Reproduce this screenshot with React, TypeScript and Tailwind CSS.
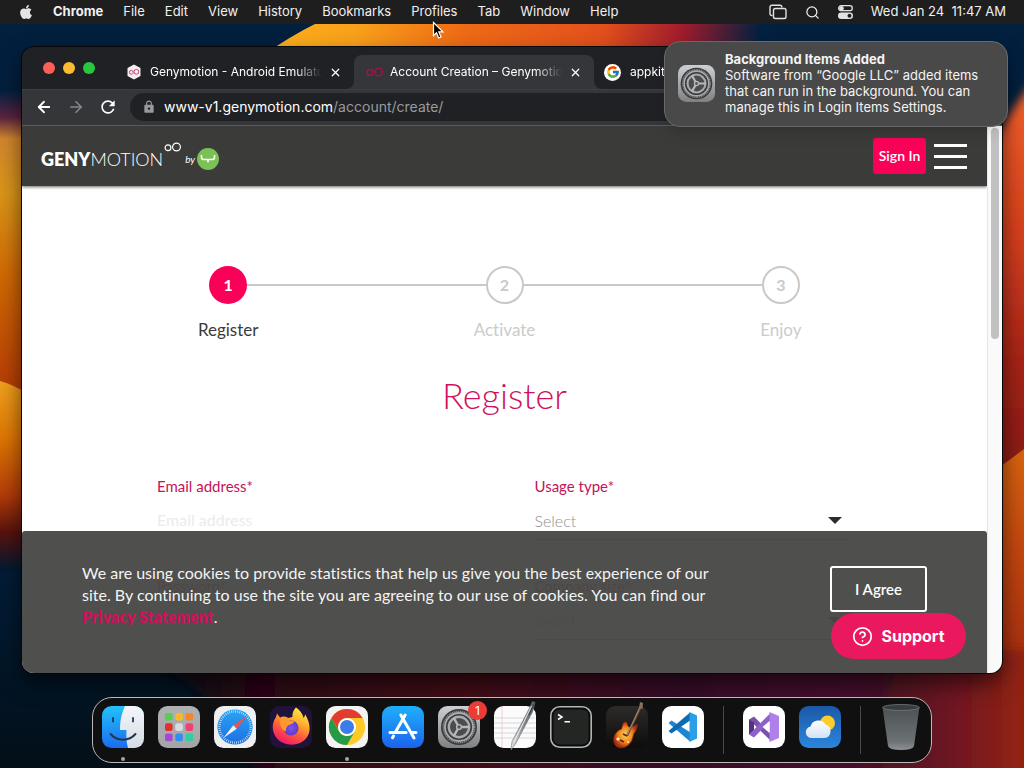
import React from "react";
import { ArrowLeft, ArrowRight, CircleHelp, Search, X } from "lucide-react";
import { FaApple } from "react-icons/fa";
import { FcGoogle } from "react-icons/fc";
import { MdLock, MdRefresh } from "react-icons/md";

const menus = ["File", "Edit", "View", "History", "Bookmarks", "Profiles", "Tab", "Window", "Help"];

function Wallpaper() {
  return (
    <svg className="absolute inset-0 h-full w-full" viewBox="0 0 1024 768" preserveAspectRatio="none" aria-hidden="true">
      <defs>
        <linearGradient id="sky" x1="0" y1="0" x2="0" y2="1">
          <stop offset="0" stopColor="#02203f" />
          <stop offset="0.75" stopColor="#021c36" />
          <stop offset="1" stopColor="#020f18" />
        </linearGradient>
        <linearGradient id="top" gradientUnits="userSpaceOnUse" x1="270" y1="0" x2="760" y2="40">
          <stop offset="0" stopColor="#fbb01c" />
          <stop offset="0.18" stopColor="#f9a01a" />
          <stop offset="0.4" stopColor="#ee6a16" />
          <stop offset="0.68" stopColor="#e2501c" />
          <stop offset="0.84" stopColor="#a01c2c" />
          <stop offset="1" stopColor="#02203f" />
        </linearGradient>
        <linearGradient id="leftA" gradientUnits="userSpaceOnUse" x1="0" y1="90" x2="0" y2="395">
          <stop offset="0" stopColor="#02203f" />
          <stop offset="0.09" stopColor="#5c2340" />
          <stop offset="0.16" stopColor="#d1862e" />
          <stop offset="0.34" stopColor="#d99518" />
          <stop offset="0.6" stopColor="#d06a04" />
          <stop offset="1" stopColor="#b43a04" />
        </linearGradient>
        <linearGradient id="leftB" gradientUnits="userSpaceOnUse" x1="0" y1="382" x2="0" y2="570">
          <stop offset="0" stopColor="#f0a01c" />
          <stop offset="0.3" stopColor="#dd7604" />
          <stop offset="0.6" stopColor="#b33c08" />
          <stop offset="0.8" stopColor="#58120e" />
          <stop offset="1" stopColor="#021a30" />
        </linearGradient>
        <linearGradient id="rightA" gradientUnits="userSpaceOnUse" x1="0" y1="90" x2="0" y2="470">
          <stop offset="0" stopColor="#f0602a" />
          <stop offset="0.35" stopColor="#d8421c" />
          <stop offset="0.7" stopColor="#a82418" />
          <stop offset="1" stopColor="#861a16" />
        </linearGradient>
        <linearGradient id="rightB" gradientUnits="userSpaceOnUse" x1="0" y1="450" x2="0" y2="768">
          <stop offset="0" stopColor="#d86410" />
          <stop offset="0.3" stopColor="#c4480e" />
          <stop offset="0.7" stopColor="#a42c10" />
          <stop offset="1" stopColor="#8a2014" />
        </linearGradient>
        <linearGradient id="floor" gradientUnits="userSpaceOnUse" x1="170" y1="0" x2="1024" y2="0">
          <stop offset="0" stopColor="#0c0a18" />
          <stop offset="0.1" stopColor="#2c0618" />
          <stop offset="0.35" stopColor="#420a18" />
          <stop offset="0.6" stopColor="#360a28" />
          <stop offset="0.85" stopColor="#521224" />
          <stop offset="0.93" stopColor="#741820" />
          <stop offset="1" stopColor="#942410" />
        </linearGradient>
        <filter id="soft"><feGaussianBlur stdDeviation="5" /></filter>
      </defs>
      <rect width="1024" height="768" fill="url(#sky)" />
      <path d="M262 56 Q330 8 400 -6 L780 -6 L760 120 L262 120Z" fill="url(#top)" />
      <path d="M-10 90H60V400H-10Z" fill="url(#leftA)" />
      <path d="M0 381 Q12 384 40 400 V570 H0Z" fill="url(#leftB)" />
      <path d="M1040 75 Q1012 105 990 150 V500H1040Z" fill="url(#rightA)" filter="url(#soft)" />
      <path d="M980 482 L1024 449 V768 H980Z" fill="url(#rightB)" />
      <path d="M165 650H1040V790H265Q240 710 165 670Z" fill="url(#floor)" filter="url(#soft)" />
      <path d="M705 660 Q725 700 730 768 H860 L900 660Z" fill="#3d1030" opacity="0.5" />
    </svg>
  );
}

function Gear({ id, className }: { id: string; className: string }) {
  return (
    <svg className={className} viewBox="0 0 42 42" aria-hidden="true">
      <defs>
        <linearGradient id={id} x1="0" y1="0" x2="0" y2="1">
          <stop offset="0" stopColor="#cdd0d2" />
          <stop offset="1" stopColor="#7f8082" />
        </linearGradient>
      </defs>
      <rect width="42" height="42" rx="9.5" fill={`url(#${id})`} />
      <circle cx="21" cy="21" r="18" fill="#3a3b3d" />
      <circle cx="21" cy="21" r="15.6" fill="none" stroke="#8b8d8f" strokeWidth="1.6" strokeDasharray="1.3 0.7" />
      <circle cx="21" cy="21" r="14" fill="none" stroke="#a9abad" strokeWidth="1.8" />
      <circle cx="21" cy="21" r="10.2" fill="#4a4c4e" stroke="#a9abad" strokeWidth="2.4" />
      <path d="M21 21 L31.500 21 M21 21 L15.700 11.800 M21 21 L15.700 30.200" stroke="#b6b8ba" strokeWidth="2.400" />
      <circle cx="21" cy="21" r="2.400" fill="#55575a" stroke="#b6b8ba" strokeWidth="1.400" />
    </svg>
  );
}

function Finder() {
  return (
    <svg className="size-full" viewBox="0 0 42 42" aria-hidden="true">
      <defs>
        <linearGradient id="fa" x1="0" y1="0" x2="0" y2="1"><stop stopColor="#22c2fb" /><stop offset="1" stopColor="#1b6cf0" /></linearGradient>
        <linearGradient id="fb" x1="0" y1="0" x2="0" y2="1"><stop stopColor="#f4f6f8" /><stop offset="1" stopColor="#d5dbe6" /></linearGradient>
        <clipPath id="fc"><rect width="42" height="42" rx="9.5" /></clipPath>
      </defs>
      <g clipPath="url(#fc)">
        <rect width="42" height="42" fill="url(#fa)" />
        <path d="M23 0 C19 9 18 16 18 24 H24.500 C24 31 24.500 37 26 42 H42V0Z" fill="url(#fb)" />
        <path d="M11 12v3.500M31 12v3.500" stroke="#173a5e" strokeWidth="1.800" strokeLinecap="round" />
        <path d="M8.500 28 C15 35.500 27 35.500 33.500 28" fill="none" stroke="#1f3650" strokeWidth="2" strokeLinecap="round" />
      </g>
    </svg>
  );
}

function Launchpad() {
  const colors = ["#55cf4f", "#fcb827", "#f6862a", "#e22f2f", "#d6dcdd", "#f1416f", "#a647d8", "#2f8ff0", "#2fcfa0"];
  return (
    <svg className="size-full" viewBox="0 0 42 42" aria-hidden="true">
      <defs><linearGradient id="lp" x1="0" y1="0" x2="0" y2="1"><stop stopColor="#aeb0b1" /><stop offset="1" stopColor="#a3a5a6" /></linearGradient></defs>
      <rect width="42" height="42" rx="9.5" fill="url(#lp)" />
      {colors.map((c, i) => (
        <rect key={c} x={7 + (i % 3) * 10.3} y={7 + Math.floor(i / 3) * 10.3} width="7.6" height="7.6" rx="2" fill={c} />
      ))}
    </svg>
  );
}

function Safari() {
  return (
    <svg className="size-full" viewBox="0 0 42 42" aria-hidden="true">
      <defs><linearGradient id="sf" x1="0" y1="0" x2="0" y2="1"><stop stopColor="#2aa5f2" /><stop offset="1" stopColor="#1d6ee2" /></linearGradient></defs>
      <rect width="42" height="42" rx="9.5" fill="#edeff1" />
      <circle cx="21" cy="21" r="17.6" fill="url(#sf)" />
      <circle cx="21" cy="21" r="15.6" fill="none" stroke="#d7ecff" strokeWidth="2.4" strokeDasharray="0.7 1.34" />
      <path d="M33 10 L19.300 19.300 L22.700 22.700Z" fill="#f0504a" />
      <path d="M9.500 32 L19.300 19.300 L22.700 22.700Z" fill="#f2f5f8" />
    </svg>
  );
}

function Firefox() {
  return (
    <svg className="size-full" viewBox="0 0 42 42" aria-hidden="true">
      <defs>
        <linearGradient id="ff" x1="0.8" y1="0" x2="0.3" y2="1"><stop stopColor="#fff04a" /><stop offset="0.35" stopColor="#ffb02c" /><stop offset="0.65" stopColor="#ff5a3c" /><stop offset="1" stopColor="#f0146e" /></linearGradient>
        <radialGradient id="fg"><stop stopColor="#8150f0" /><stop offset="1" stopColor="#5a3cc4" /></radialGradient>
      </defs>
      <rect width="42" height="42" rx="9.5" fill="#201238" />
      <path d="M26 1.500 C31 5 33 9 33.500 12 C35 10.500 35 8.500 35 8 C41 18 41 27 36 32.500 C28.500 41 14 40.500 7 32.500 C1.500 26 1.500 17 6 11 L7 7.500 L10 11.500 C13 10 16 10.500 18 12 L22.500 11 C22 7 24 3.500 26 1.500Z" fill="url(#ff)" />
      <circle cx="21" cy="22" r="7.600" fill="url(#fg)" />
      <path d="M10.500 13 C14 10 18 11 20 14.500 L24.500 15.500 C23.500 18 20 18.200 18 19.500 C16 21.500 15.500 23.500 16 25.500 C11 24 9.500 18.500 10.500 13Z" fill="#ff982e" />
    </svg>
  );
}

function Chrome() {
  return (
    <svg className="size-full" viewBox="0 0 42 42" aria-hidden="true">
      <rect width="42" height="42" rx="9.5" fill="#f3f3f3" />
      <circle cx="21" cy="21" r="18" fill="#ffc928" />
      <path d="M5.400 12 A18 18 0 0 1 36.600 12 H21 A9 9 0 0 0 13.200 16.500 L12.500 24Z" fill="#e23c32" />
      <path d="M5.400 12 A18 18 0 0 0 21 39 L28.800 25.500 A9 9 0 0 1 13.200 25.500Z" fill="#259b4a" />
      <circle cx="21" cy="21" r="9" fill="#fff" />
      <circle cx="21" cy="21" r="7" fill="#3b7de8" />
    </svg>
  );
}

function AppStore() {
  return (
    <svg className="size-full" viewBox="0 0 42 42" aria-hidden="true">
      <defs><linearGradient id="as" x1="0" y1="0" x2="0" y2="1"><stop stopColor="#1fb0fa" /><stop offset="1" stopColor="#1b63ee" /></linearGradient></defs>
      <rect width="42" height="42" rx="9.5" fill="url(#as)" />
      <g stroke="#fff" strokeWidth="3" strokeLinecap="round">
        <path d="M23.200 9 L13.500 26" />
        <path d="M18.800 9 L32 32" />
        <path d="M8 26.500 H24" />
        <path d="M30.500 26.500 H34" />
        <path d="M11.500 30 L10.500 31.800" />
      </g>
    </svg>
  );
}

function TextEdit() {
  return (
    <svg className="size-full overflow-visible" viewBox="0 0 42 42" aria-hidden="true">
      <defs><linearGradient id="te" x1="0" y1="0" x2="1" y2="0"><stop stopColor="#e6e8ea" /><stop offset="0.5" stopColor="#8b9094" /><stop offset="1" stopColor="#4f5458" /></linearGradient></defs>
      <rect width="42" height="42" rx="9.5" fill="#fbfbfb" />
      <path d="M1 12H41M0 17H42M0 22H42M0 27H42M0 32H42" stroke="#d2d2d2" strokeWidth="0.9" />
      <path d="M8 1V41" stroke="#efc4c0" strokeWidth="0.8" />
      <path d="M38.500 -4.500 L41 -3.500 L38.500 6 L22 37 L17 44 L18 35.500 L35 3Z" fill="url(#te)" stroke="#6b7074" strokeWidth="0.600" />
      <path d="M37.500 0 L20 36" stroke="#f5f6f7" strokeWidth="0.900" />
      <path d="M40 -2 L35 9" stroke="#34383b" strokeWidth="0.900" />
    </svg>
  );
}

function Terminal() {
  return (
    <svg className="size-full" viewBox="0 0 42 42" aria-hidden="true">
      <rect x="0.800" y="0.800" width="40.400" height="40.400" rx="9" fill="#0b0b0c" stroke="#b3b5b6" strokeWidth="1.600" />
      <rect x="3.500" y="3.500" width="35" height="35" rx="6" fill="#242624" />
      <path d="M8 8.500 L12 11 L8 13.500 M14.500 15.800H20" fill="none" stroke="#fff" strokeWidth="1.500" />
    </svg>
  );
}

function GarageBand() {
  return (
    <svg className="size-full overflow-visible" viewBox="0 0 42 42" aria-hidden="true">
      <defs>
        <linearGradient id="gb" x1="0" y1="0" x2="0" y2="1"><stop stopColor="#2c2b2a" /><stop offset="1" stopColor="#0d0c0b" /></linearGradient>
        <radialGradient id="gg"><stop stopColor="#ffd34a" /><stop offset="0.600" stopColor="#f0821e" /><stop offset="1" stopColor="#a82a10" /></radialGradient>
      </defs>
      <rect width="42" height="42" rx="9.5" fill="url(#gb)" />
      <path d="M20 16 C17 15 17 19 15.500 23 C9 25.500 6 32 8.500 38 C11 43 18 43 22.500 39 C27 35 26.500 31 28 27.500 C30 25 32 22 31 18 C28 20 25 22 22.500 20.500 C21 19 22 17 20 16Z" fill="url(#gg)" stroke="#7b2211" strokeWidth="0.700" />
      <path d="M21 30 L35 0" stroke="#6c5340" strokeWidth="2.200" />
      <path d="M20 31 L34 1" stroke="#c7a27c" strokeWidth="0.700" />
      <path d="M33 2 L34 -4 L37 -3 L36.500 3Z" fill="#8c7058" />
      <path d="M14 34 L18 36 M17 28 L21 30" stroke="#4b2a1c" strokeWidth="1.600" />
      <circle cx="12" cy="33" r="1.600" fill="#fff3bd" />
      <circle cx="22" cy="36" r="1" fill="#fff3bd" />
    </svg>
  );
}

function VSCode() {
  return (
    <svg className="size-full" viewBox="0 0 42 42" aria-hidden="true">
      <rect width="42" height="42" rx="9.5" fill="#fff" />
      <path d="M6.500 17 L9.500 14.500 L34 30 L28 35.500Z" fill="#1c86d1" />
      <path d="M6.500 25 L28 6.500 L33 11 L9.500 27.500Z" fill="#0d6bb3" />
      <path d="M27.500 6 L35 9.500 V32.500 L27.500 36 Z" fill="#2b9ee8" />
    </svg>
  );
}

function VisualStudio() {
  return (
    <svg className="size-full" viewBox="0 0 42 42" aria-hidden="true">
      <rect width="42" height="42" rx="9.5" fill="#fff" />
      <path d="M6 13.500 L11 10.500 L28 28 V35 Z" fill="#7a52ae" />
      <path d="M6 13.500 L11 16.500 V25.500 L6 28.500Z" fill="#52317f" />
      <path d="M6 28.500 L11 31.500 L28 14 V6.500Z" fill="#8e60ca" />
      <path d="M26.500 6 L36 10 V32 L26.500 36Z" fill="#b080ea" />
      <path d="M26.500 15 V27 L19.500 21Z" fill="#fff" />
    </svg>
  );
}

function Weather() {
  return (
    <svg className="size-full" viewBox="0 0 42 42" aria-hidden="true">
      <defs>
        <linearGradient id="wa" x1="0" y1="0" x2="0" y2="1"><stop stopColor="#1c58a8" /><stop offset="1" stopColor="#2b86dd" /></linearGradient>
        <linearGradient id="wb" x1="0" y1="0" x2="0" y2="1"><stop stopColor="#fff" /><stop offset="1" stopColor="#cfe2f6" /></linearGradient>
      </defs>
      <rect width="42" height="42" rx="9.5" fill="url(#wa)" />
      <circle cx="28.500" cy="17" r="7.500" fill="#fccb2c" />
      <path d="M12.500 32 A5.800 5.800 0 0 1 11.500 20.500 A8.200 8.200 0 0 1 26.500 18.500 A6.900 6.900 0 0 1 25.500 32Z" fill="url(#wb)" />
    </svg>
  );
}

function Trash() {
  return (
    <svg className="size-full overflow-visible" viewBox="0 0 42 42" aria-hidden="true">
      <defs><linearGradient id="tr" x1="0" y1="0" x2="0" y2="1"><stop stopColor="#4c5154" /><stop offset="0.800" stopColor="#6c7174" /><stop offset="1" stopColor="#8f9294" /></linearGradient></defs>
      <path d="M2.500 1 L8 40 Q9 44 21 44 Q33 44 34 40 L39.500 1Z" fill="url(#tr)" />
      <ellipse cx="21" cy="1.500" rx="18.500" ry="3" fill="#393d3f" stroke="#74787b" strokeWidth="0.800" />
    </svg>
  );
}

interface DockApp {
  name: string;
  icon: React.ReactNode;
  running?: boolean;
  badge?: string;
}

const apps: DockApp[] = [
  { name: "Finder", icon: <Finder />, running: true },
  { name: "Launchpad", icon: <Launchpad /> },
  { name: "Safari", icon: <Safari /> },
  { name: "Firefox", icon: <Firefox /> },
  { name: "Google Chrome", icon: <Chrome />, running: true },
  { name: "App Store", icon: <AppStore /> },
  { name: "System Settings", icon: <Gear id="dock-gear" className="size-full" />, badge: "1" },
  { name: "TextEdit", icon: <TextEdit /> },
  { name: "Terminal", icon: <Terminal /> },
  { name: "GarageBand", icon: <GarageBand /> },
  { name: "Visual Studio Code", icon: <VSCode /> },
];
const recent: DockApp[] = [
  { name: "Visual Studio", icon: <VisualStudio /> },
  { name: "Weather", icon: <Weather /> },
];

function DockItem({ app }: { app: DockApp }) {
  return (
    <button type="button" aria-label={app.name} className="relative size-[42px] shrink-0">
      {app.icon}
      {app.badge && (
        <span className="absolute -top-[5px] -right-[7px] flex size-[19px] items-center justify-center rounded-full bg-[#ec3b36] text-xs text-white">
          {app.badge}
        </span>
      )}
      {app.running && <span className="absolute top-[51px] left-[19px] size-1 rounded-full bg-[#a5a5a5]" />}
    </button>
  );
}

function Dock() {
  return (
    <nav aria-label="Dock" className="relative mx-auto mb-[5px] flex h-[66px] items-start gap-[14px] rounded-[20px] border border-[#bfb6b8] bg-[#101011] px-[9px] pt-2">
      {apps.map((a) => <DockItem key={a.name} app={a} />)}
      <span className="mx-[5px] h-12 w-px bg-[#4a4a4a]" />
      {recent.map((a) => <DockItem key={a.name} app={a} />)}
      <span className="mx-[5px] h-12 w-px bg-[#4a4a4a]" />
      <DockItem app={{ name: "Trash", icon: <Trash /> }} />
    </nav>
  );
}

function MenuBar() {
  return (
    <header className="relative flex h-6 items-center bg-[#1f1e1e] px-[18px] text-[13px] text-[#f0f0f0]">
      <FaApple className="mr-[19px] size-4 text-[#e4e4e4]" />
      <nav className="flex items-center gap-5">
        <button type="button" className="font-bold">Chrome</button>
        {menus.map((m) => <button type="button" key={m}>{m}</button>)}
      </nav>
      <div className="ml-auto flex items-center gap-[18px]">
        <svg className="h-4 w-[18px]" viewBox="0 0 18 16" fill="none" stroke="#e2e2e2" strokeWidth="1.400" aria-hidden="true">
          <path d="M3.500 11.500 H2.800 A1.800 1.800 0 0 1 1 9.700 V3 A1.800 1.800 0 0 1 2.800 1.200 H11 A1.800 1.800 0 0 1 12.800 3 V3.500" />
          <rect x="4.500" y="4.500" width="12.500" height="10" rx="1.800" />
        </svg>
        <Search className="size-[15px]" />
        <svg className="h-4 w-[15px]" viewBox="0 0 15 16" aria-hidden="true">
          <rect x="0.700" y="1.700" width="13.600" height="5" rx="2.500" fill="none" stroke="#e2e2e2" strokeWidth="1.300" />
          <circle cx="3.500" cy="4.200" r="2.300" fill="#e2e2e2" />
          <rect y="8.500" width="15" height="6.500" rx="3.200" fill="#e2e2e2" />
          <circle cx="11.500" cy="11.700" r="2" fill="#1f1e1e" />
        </svg>
        <time className="whitespace-pre">{"Wed Jan 24  11:47 AM"}</time>
      </div>
    </header>
  );
}

function Tab({ icon, title, active }: { icon: React.ReactNode; title: string; active?: boolean }) {
  return (
    <div className={active ? "relative flex w-60 shrink-0 items-center rounded-t-lg bg-[#35363a] px-3" : "flex w-60 shrink-0 items-center px-3"}>
      <span className="flex w-6 shrink-0 items-center">{icon}</span>
      <button type="button" className="w-[175px] overflow-hidden text-left whitespace-nowrap text-white [mask-image:linear-gradient(to_right,black_84%,transparent)]">
        {title}
      </button>
      <button type="button" aria-label="Close tab" className="ml-[7px]"><X className="size-[13px] text-white" strokeWidth={2.2} /></button>
      {active && (
        <>
          <svg className="absolute bottom-0 -left-2 size-2" viewBox="0 0 8 8" aria-hidden="true"><path d="M8 0V8H0A8 8 0 0 0 8 0Z" fill="#35363a" /></svg>
          <svg className="absolute -right-2 bottom-0 size-2" viewBox="0 0 8 8" aria-hidden="true"><path d="M0 0V8H8A8 8 0 0 1 0 0Z" fill="#35363a" /></svg>
        </>
      )}
    </div>
  );
}

function BrowserChrome() {
  return (
    <div className="text-[12px]">
      <div className="flex h-[42px] overflow-hidden bg-[#202124] pt-2">
        <div className="flex w-[92px] shrink-0 items-center gap-2 pb-2 pl-[21px]">
          <button type="button" aria-label="Close" className="size-3 rounded-full bg-[#fe5f57]" />
          <button type="button" aria-label="Minimize" className="size-3 rounded-full bg-[#fdbc2e]" />
          <button type="button" aria-label="Zoom" className="size-3 rounded-full bg-[#28c840]" />
        </div>
        <Tab
          title="Genymotion - Android Emulator"
          icon={
            <svg className="size-4" viewBox="0 0 16 16" aria-hidden="true">
              <path d="M8 0.500L14.500 4V12L8 15.500L1.500 12V4Z" fill="#f3edf1" />
              <circle cx="5.300" cy="8.300" r="1.900" fill="none" stroke="#c64a78" />
              <circle cx="10.400" cy="7.800" r="2.400" fill="none" stroke="#c64a78" />
            </svg>
          }
        />
        <Tab
          active
          title="Account Creation – Genymotion"
          icon={
            <svg className="h-4 w-[18px]" viewBox="0 0 18 16" fill="none" stroke="#9c1449" strokeWidth="1.500" aria-hidden="true">
              <circle cx="4" cy="8.500" r="3" />
              <circle cx="12.800" cy="8" r="3.800" />
            </svg>
          }
        />
        <Tab title="appkit - Google Search" icon={<span className="-ml-0.5 flex size-[17px] items-center justify-center rounded-full bg-white"><FcGoogle className="size-3.5" /></span>} />
      </div>
      <div className="flex h-9 items-center border-t border-[#3d3e42] bg-[#35363a] pb-0.5 pl-[13px] text-white">
        <button type="button" aria-label="Back"><ArrowLeft className="size-[18px]" strokeWidth={2.4} /></button>
        <button type="button" aria-label="Forward" className="ml-[14px]"><ArrowRight className="size-[18px] text-[#85868a]" strokeWidth={2.2} /></button>
        <button type="button" aria-label="Reload" className="ml-[13px]"><MdRefresh className="size-5" /></button>
        <div className="ml-3 flex h-7 flex-1 items-center rounded-l-full bg-[#202124] pl-3">
          <MdLock className="size-[14px] text-[#97999d]" />
          <a href="#address" className="ml-2 text-[14px]">
            www-v1.genymotion.com<span className="text-[#999b9f]">/account/create/</span>
          </a>
        </div>
      </div>
    </div>
  );
}

const steps = [
  { n: "1", label: "Register", on: true },
  { n: "2", label: "Activate", on: false },
  { n: "3", label: "Enjoy", on: false },
];

function Steps() {
  return (
    <ol className="grid grid-cols-3 px-[68px] pt-20">
      {steps.map((s, i) => (
        <li key={s.n}>
          <div className="flex items-center">
            <span className={i === 0 ? "h-0.5 flex-1" : "h-0.5 flex-1 bg-[#c9c9c9]"} />
            <span className={s.on ? "flex size-[38px] items-center justify-center rounded-full bg-[#fb0058] text-base font-bold text-white" : "flex size-[38px] items-center justify-center rounded-full border-2 border-[#c9c9c9] text-base font-bold text-[#c9c9c9]"}>
              {s.n}
            </span>
            <span className={i === 2 ? "h-0.5 flex-1" : "h-0.5 flex-1 bg-[#c9c9c9]"} />
          </div>
          <p className={s.on ? "mt-4 text-center text-[17px] leading-5 text-[#3b3b3b]" : "mt-4 text-center text-[17px] leading-5 text-[#cbcbcb]"}>{s.label}</p>
        </li>
      ))}
    </ol>
  );
}

function TextField({ id, label, placeholder, type }: { id: string; label: string; placeholder: string; type: string }) {
  return (
    <div>
      <label htmlFor={id} className="block text-[15px] leading-5 text-[#c4135a]">{label}</label>
      <input id={id} type={type} placeholder={placeholder} className="mt-1.5 block h-[38px] w-full border-b border-[#ddd] pb-0.5 text-base outline-none placeholder:text-[#ebebeb]" />
    </div>
  );
}

function SelectField({ id, label }: { id: string; label: string }) {
  return (
    <div>
      <label htmlFor={id} className="block text-[15px] leading-5 text-[#c4135a]">{label}</label>
      <div className="mt-1.5 flex h-[38px] items-center border-b border-[#888] pr-2.5">
        <select id={id} className="min-w-0 flex-1 appearance-none bg-transparent text-base font-light text-[#8f8f8f] outline-none">
          <option>Select</option>
        </select>
        <svg className="h-[7px] w-[14px]" viewBox="0 0 14 7" aria-hidden="true"><path d="M0 0H14L7 7Z" fill="#2c2c2c" /></svg>
      </div>
    </div>
  );
}

function Site() {
  return (
    <div className="relative flex-1 overflow-hidden bg-white font-['Lato',sans-serif] [font-variant-ligatures:none]">
      <header className="relative flex h-[60px] items-center bg-[#3b3b3a] pr-5 pl-[19px] shadow-[0_1px_3px_rgba(0,0,0,0.6)]">
        <a href="#home" className="flex items-center pt-1.5 text-white">
          <span className="text-[18px] font-extrabold">GENY</span>
          <span className="text-[18px] font-light">MOTION</span>
          <svg className="mb-6 ml-px h-[10px] w-[18px]" viewBox="0 0 18 10" fill="none" stroke="#fff" strokeWidth="1.200" aria-hidden="true">
            <circle cx="4" cy="5.800" r="2.900" />
            <circle cx="12.500" cy="5" r="3.900" />
          </svg>
          <span className="ml-[3px] text-[10px] italic">by</span>
          <svg className="ml-0.5 size-[22px]" viewBox="0 0 22 22" aria-hidden="true">
            <circle cx="11" cy="11" r="11" fill="#7cc156" />
            <path d="M4.500 7V9.500Q4.500 11.500 6.500 11.500H15.500Q17.500 11.500 17.500 9.500V7M11 11.500V14.500" fill="none" stroke="#fff" strokeWidth="1.600" />
          </svg>
        </a>
        <button type="button" className="ml-auto h-9 w-[53px] rounded-[3px] bg-[#fb0058] text-sm font-semibold text-white">Sign In</button>
        <button type="button" aria-label="Menu" className="ml-2 flex w-[33px] flex-col gap-2">
          <span className="h-[3px] bg-white" />
          <span className="h-[3px] bg-white" />
          <span className="h-[3px] bg-white" />
        </button>
      </header>
      <main>
        <Steps />
        <h1 className="mt-[35px] mb-[61px] text-center text-4xl leading-10 font-light text-[#d0105c]">Register</h1>
        <form className="grid grid-cols-2 gap-x-15 gap-y-9 px-[135px] pb-8">
          <TextField id="email" type="email" label="Email address*" placeholder="Email address" />
          <SelectField id="usage" label="Usage type*" />
          <TextField id="password" type="password" label="Password*" placeholder="" />
          <SelectField id="size" label="Company size*" />
        </form>
      </main>
      <section aria-label="Cookies" className="absolute inset-x-0 bottom-0 flex h-[142px] items-start justify-between rounded-t-[3px] bg-[#484846]/96 px-15 pt-[31px]">
        <p className="w-[640px] text-base leading-[22px] text-[#f4f4f4]">
          We are using cookies to provide statistics that help us give you the best experience of our site. By continuing to use the site you are agreeing to our use of cookies. You can find our{" "}
          <a href="#privacy" className="font-extrabold text-[#d0105a]">Privacy Statement</a>.
        </p>
        <button type="button" className="mt-1 h-[46px] w-[97px] rounded-[3px] border-2 border-white text-[15px] font-semibold text-white">I Agree</button>
      </section>
      <button type="button" className="absolute right-[21px] bottom-[14px] flex h-[46px] w-[135px] items-center justify-center gap-2 rounded-full bg-[#e9185f] font-['Inter',sans-serif] text-base font-bold text-white">
        <CircleHelp className="size-[21px]" />
        Support
      </button>
    </div>
  );
}

function Notification() {
  return (
    <aside role="status" className="absolute top-[41px] right-4 flex h-[86px] w-[344px] items-center gap-2.5 rounded-2xl border border-[#696969] bg-[#4a4949] pb-0.5 pl-[13px] text-[13px] leading-4 text-[#f4f4f4] shadow-lg">
      <Gear id="note-gear" className="size-[37px] shrink-0" />
      <div>
        <p className="font-bold">Background Items Added</p>
        <p>
          Software from “Google LLC” added items<br />that can run in the background. You can<br />manage this in Login Items Settings.
        </p>
      </div>
    </aside>
  );
}

export default function App() {
  return (
    <div className="relative flex min-h-screen flex-col overflow-hidden bg-[#02203f] font-['Inter',sans-serif]">
      <Wallpaper />
      <MenuBar />
      <div className="relative mx-[22px] mt-[23px] mb-6 flex flex-1 flex-col overflow-hidden rounded-xl shadow-[0_0_0_1px_#080808,0_10px_22px_rgba(0,0,0,0.6)]">
        <BrowserChrome />
        <div className="flex flex-1 border-t border-[#5b5d5c]">
          <Site />
          <div className="w-[15px] border-l border-[#e6e6e6] bg-[#fafafa] px-[3px] pt-0.5">
            <div className="h-[211px] w-2 rounded-full bg-[#c1c1c1]" />
          </div>
        </div>
      </div>
      <Dock />
      <Notification />
      <svg className="absolute top-[21px] left-[432px] h-[19px] w-[13px]" viewBox="0 0 13 19" aria-hidden="true">
        <path d="M1.500 1.500V14.500L4.500 11.700L6.700 17L9 16L6.800 10.900H10.900Z" fill="#000" stroke="#fff" strokeWidth="1.200" />
      </svg>
    </div>
  );
}
